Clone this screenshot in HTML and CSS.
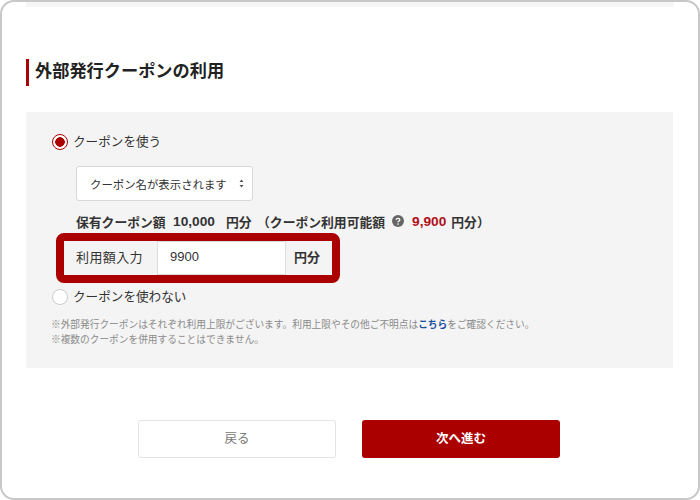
FILE: index.html
```html
<!DOCTYPE html>
<html lang="ja">
<head>
    <meta charset="UTF-8">
    <title>外部発行クーポンの利用</title>
    <link rel="stylesheet" href="styles.css">
</head>
<body>
    <div class="frame">
        <div class="top-band"></div>
        <h2 class="heading">外部発行クーポンの利用</h2>
        <div class="panel">
            <div class="radio-row first">
                <span class="radio checked"></span>
                <span class="radio-label">クーポンを使う</span>
            </div>
            <div class="select">
                <span>クーポン名が表示されます</span>
                <svg class="select-arrows" width="5" height="9" viewBox="0 0 5 9">
                    <path d="M2.5 0.5L4.5 3H0.5Z M2.5 8.5L0.5 6H4.5Z" fill="#555"/>
                </svg>
            </div>
            <p class="balance">
                <span>保有クーポン額</span><span class="num">10,000</span><span class="unit">円分</span>
                <span class="usable">（クーポン利用可能額</span>
                <svg class="help" width="12" height="12" viewBox="0 0 13 13">
                    <circle cx="6.5" cy="6.5" r="6.5" fill="#666"/>
                    <path d="M4.5 5.2C4.5 3.2 8.5 3.2 8.5 5.2C8.5 6.5 6.5 6.4 6.5 7.8" fill="none" stroke="#fff" stroke-width="1.4"/>
                    <circle cx="6.5" cy="9.8" r="0.9" fill="#fff"/>
                </svg>
                <span class="red-num">9,900</span><span class="unit-end">円分）</span>
            </p>
            <div class="amount-box">
                <span class="amount-label">利用額入力</span>
                <span class="amount-input">9900</span>
                <span class="amount-unit">円分</span>
            </div>
            <div class="radio-row second">
                <span class="radio"></span>
                <span class="radio-label">クーポンを使わない</span>
            </div>
            <p class="note first-note">※外部発行クーポンはそれぞれ利用上限がございます。利用上限やその他ご不明点は<a href="#">こちら</a>をご確認ください。</p>
            <p class="note">※複数のクーポンを併用することはできません。</p>
        </div>
        <div class="buttons">
            <button type="button" class="btn back">戻る</button>
            <button type="button" class="btn next">次へ進む</button>
        </div>
    </div>
</body>
</html>
```

FILE: styles.css
```css
* {
    box-sizing: border-box;
}
body {
    margin: 0;
    font-family: "Liberation Sans", "Noto Sans CJK JP", sans-serif;
    color: #333;
    background-color: #fff;
}
p {
    margin: 0;
}
.frame {
    position: relative;
    width: 700px;
    height: 500px;
    padding: 0 24px 0 24px;
    border: 2px solid #c8c8c8;
    border-radius: 14px;
    overflow: hidden;
}
.top-band {
    height: 5px;
    background-color: #f6f6f6;
}
.heading {
    margin: 52px 0 0 0;
    height: 27px;
    padding-left: 6px;
    border-left: 3px solid #ab0000;
    font-size: 17.2px;
    line-height: 25px;
    font-weight: bold;
    color: #222;
}
.panel {
    width: 647px;
    height: 256px;
    margin-top: 26px;
    padding: 21px 0 0 26px;
    background-color: #f4f4f4;
}
.radio-row {
    display: flex;
    align-items: center;
    gap: 5px;
    height: 18px;
    font-size: 12.6px;
}
.radio-label {
    padding-bottom: 3px;
}
.radio {
    width: 16px;
    height: 16px;
    border: 1px solid #ccc;
    border-radius: 50%;
    background-color: #fff;
}
.radio.checked {
    border: 1.5px solid #ab0000;
    background: radial-gradient(circle, #ab0000 0, #ab0000 4.5px, #fff 5px);
}
.select {
    display: flex;
    justify-content: space-between;
    align-items: center;
    width: 177px;
    height: 35px;
    margin: 15px 0 0 24px;
    padding: 0 8px 0 13px;
    background-color: #fff;
    border: 1px solid #d8d8d8;
    border-radius: 3px;
    font-size: 11.4px;
}
.balance {
    display: flex;
    align-items: center;
    height: 18px;
    margin: 11px 0 0 24px;
    font-size: 12.8px;
    font-weight: bold;
}
.num {
    margin-left: 7.5px;
    font-size: 13.7px;
}
.unit {
    margin-left: 11px;
}
.usable {
    margin-left: 5.5px;
}
.help {
    margin-left: 7px;
}
.red-num {
    margin-left: 8px;
    font-size: 13.7px;
    color: #b0101a;
}
.unit-end {
    margin-left: 5px;
}
.amount-box {
    display: flex;
    align-items: stretch;
    width: 284px;
    height: 50px;
    margin: 3px 0 0 4px;
    border: 8px solid #ab0000;
    border-radius: 8px;
    font-size: 13px;
}
.amount-label {
    display: flex;
    align-items: center;
    width: 93px;
    padding: 0 0 3px 12px;
    letter-spacing: 0.4px;
}
.amount-input {
    display: flex;
    align-items: center;
    width: 129px;
    padding: 0 0 3px 12px;
    background-color: #fff;
    border: 1px solid #ddd;
}
.amount-unit {
    display: flex;
    align-items: center;
    padding: 0 0 3px 8px;
    font-weight: bold;
}
.second {
    margin-top: 5px;
}
.note {
    margin-left: -1px;
    font-size: 9.7px;
    line-height: 15px;
    color: #8a8a8a;
}
.first-note {
    margin-top: 11px;
}
.note a {
    color: #1a4fa0;
    font-weight: bold;
    text-decoration: none;
}
.buttons {
    display: flex;
    gap: 26px;
    margin: 52px 0 0 112px;
}
.btn {
    width: 198px;
    height: 38px;
    padding: 0 0 3px;
    border-radius: 3px;
    font-family: inherit;
    font-size: 12.5px;
    cursor: pointer;
}
.back {
    background-color: #fff;
    border: 1px solid #e4e4e4;
    color: #777;
}
.next {
    background-color: #ab0000;
    border: none;
    color: #fff;
    font-weight: bold;
}
```
